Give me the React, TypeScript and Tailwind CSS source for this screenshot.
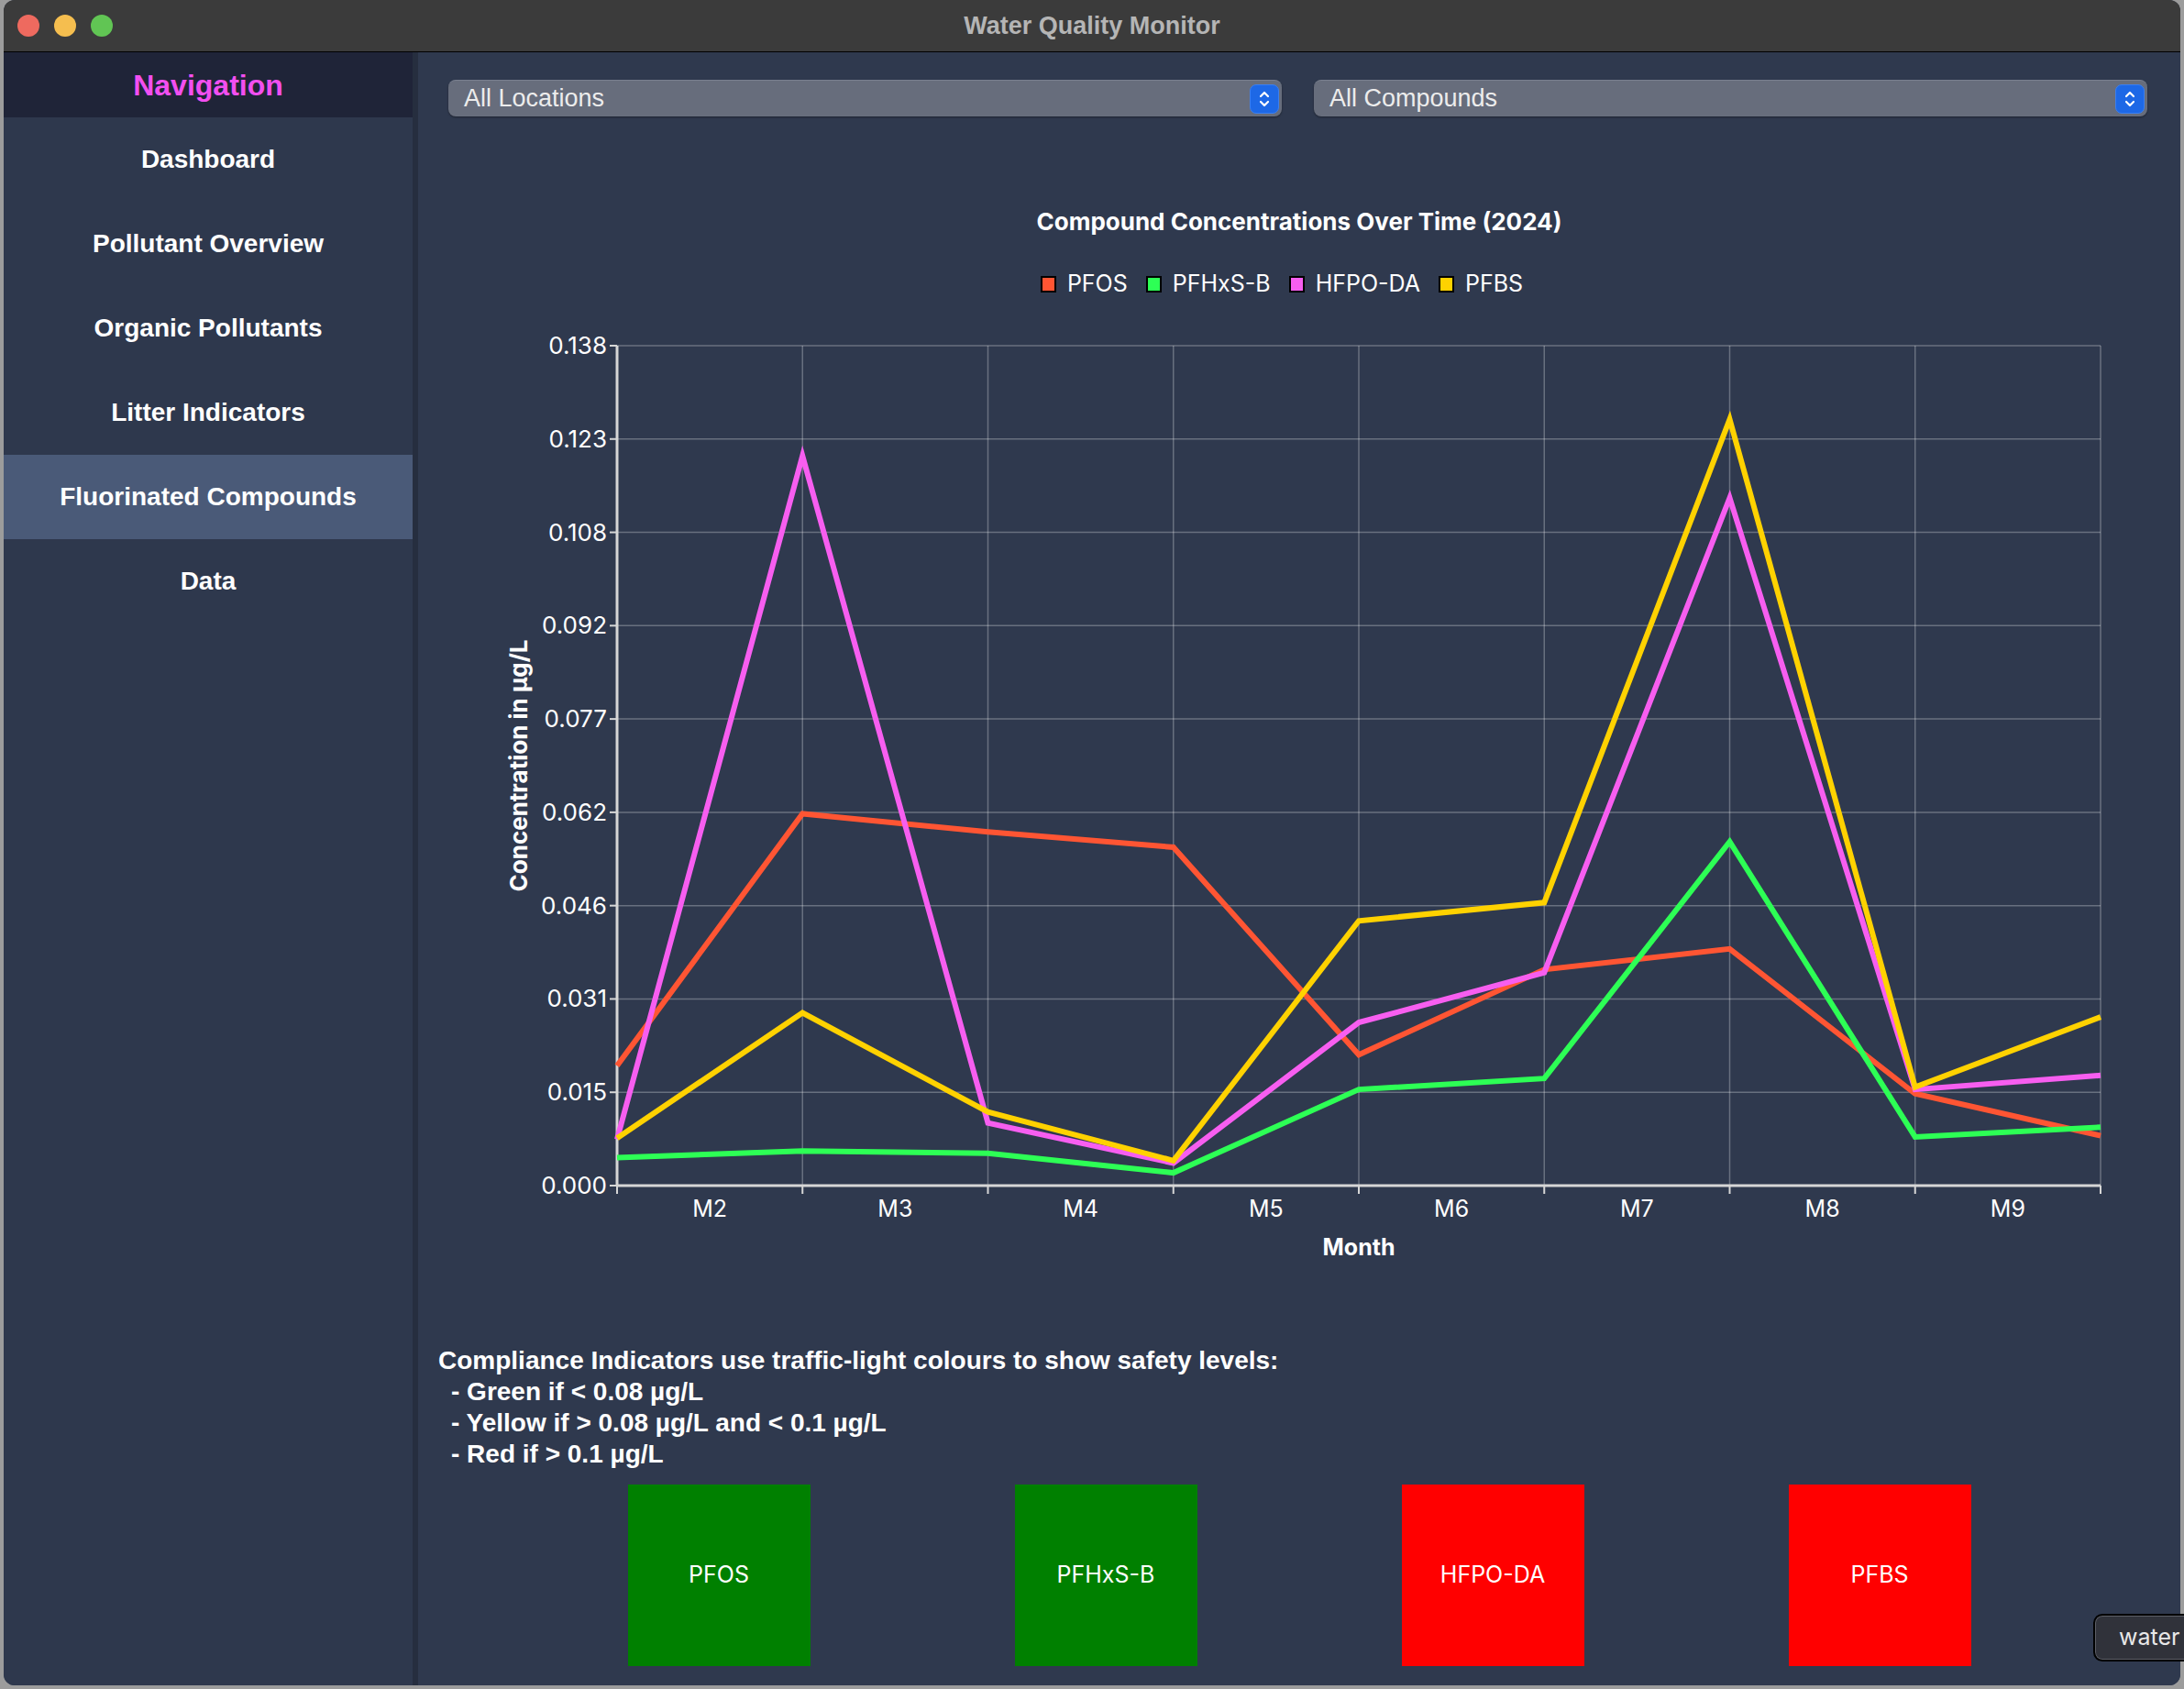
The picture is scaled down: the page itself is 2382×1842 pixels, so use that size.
import { useMemo } from 'react';

interface Series {
  name: string;
  color: string;
  values: number[];
}

const NAV_ITEMS = [
  'Dashboard',
  'Pollutant Overview',
  'Organic Pollutants',
  'Litter Indicators',
  'Fluorinated Compounds',
  'Data',
];

const Y_LABELS = ['0.138', '0.123', '0.108', '0.092', '0.077', '0.062', '0.046', '0.031', '0.015', '0.000'];
const MONTHS = ['M2', 'M3', 'M4', 'M5', 'M6', 'M7', 'M8', 'M9'];

// plot geometry (svg coords, relative to the main column)
const PLOT_LEFT = 217;
const PLOT_RIGHT = 1835;
const PLOT_TOP = 52;
const PLOT_BOTTOM = 968;
const Y_MAX = 0.138;

const COMPLIANCE = [
  { name: 'PFOS', safe: true },
  { name: 'PFHxS-B', safe: true },
  { name: 'HFPO-DA', safe: false },
  { name: 'PFBS', safe: false },
];

function Stepper() {
  return (
    <div className="w-[32px] h-[32px] rounded-[7px] bg-[#1d68e6] border border-[#3b7ff0] flex items-center justify-center">
      <svg width="14" height="22" viewBox="0 0 14 22" fill="none" stroke="white" strokeWidth="2.2" strokeLinecap="round" strokeLinejoin="round">
        <path d="M3 8 L7 4 L11 8" />
        <path d="M3 14 L7 18 L11 14" />
      </svg>
    </div>
  );
}

function Dropdown({ label }: { label: string }) {
  return (
    <div className="flex-1 h-[40px] rounded-[8px] bg-[#676d7c] border-t border-[#7a8090] shadow-[0_1px_2px_rgba(0,0,0,0.4)] flex items-center justify-between pl-[17px] pr-[3px]">
      <span className="text-[27px] text-[#ececec] font-['Liberation_Sans',sans-serif]">{label}</span>
      <Stepper />
    </div>
  );
}

function Chart({ series }: { series: Series[] }) {
  const plotW = PLOT_RIGHT - PLOT_LEFT;
  const plotH = PLOT_BOTTOM - PLOT_TOP;
  const xAt = (i: number) => PLOT_LEFT + (i * plotW) / 8;
  const yAt = (v: number) => PLOT_TOP + (1 - v / Y_MAX) * plotH;

  return (
    <svg width="1921" height="1080" className="block" style={{ fontFamily: 'Inter, sans-serif' }}>
      {/* grid */}
      {Y_LABELS.map((_, k) => {
        const y = PLOT_TOP + (k * plotH) / 9;
        return <line key={`h${k}`} x1={PLOT_LEFT} x2={PLOT_RIGHT} y1={y} y2={y} stroke="rgba(255,255,255,0.28)" strokeWidth="1.5" />;
      })}
      {Array.from({ length: 9 }).map((_, i) => (
        <line key={`v${i}`} x1={xAt(i)} x2={xAt(i)} y1={PLOT_TOP} y2={PLOT_BOTTOM} stroke="rgba(255,255,255,0.28)" strokeWidth="1.5" />
      ))}

      {/* axes */}
      <line x1={PLOT_LEFT} x2={PLOT_LEFT} y1={PLOT_TOP} y2={PLOT_BOTTOM} stroke="#d6d6d6" strokeWidth="3" />
      <line x1={PLOT_LEFT} x2={PLOT_RIGHT} y1={PLOT_BOTTOM} y2={PLOT_BOTTOM} stroke="#d6d6d6" strokeWidth="3" />
      {Y_LABELS.map((label, k) => {
        const y = PLOT_TOP + (k * plotH) / 9;
        return (
          <g key={`yl${k}`}>
            <line x1={PLOT_LEFT - 8} x2={PLOT_LEFT} y1={y} y2={y} stroke="#d6d6d6" strokeWidth="2" />
            <text x={PLOT_LEFT - 11} y={y + 9} textAnchor="end" fontSize="26" fill="#ffffff">
              {label}
            </text>
          </g>
        );
      })}
      {Array.from({ length: 9 }).map((_, i) => (
        <line key={`xt${i}`} x1={xAt(i)} x2={xAt(i)} y1={PLOT_BOTTOM} y2={PLOT_BOTTOM + 9} stroke="#d6d6d6" strokeWidth="2" />
      ))}
      {MONTHS.map((m, i) => (
        <text key={m} x={xAt(i) + plotW / 16} y={PLOT_BOTTOM + 34} textAnchor="middle" fontSize="25" fill="#ffffff">
          {m}
        </text>
      ))}

      {/* axis titles */}
      <text x={(PLOT_LEFT + PLOT_RIGHT) / 2} y={1044} textAnchor="middle" fontSize="25" fontWeight="700" fill="#ffffff">
        Month
      </text>
      <text
        x={0}
        y={0}
        transform="translate(119 510) rotate(-90)"
        textAnchor="middle"
        fontSize="26"
        fontWeight="700"
        fill="#ffffff"
      >
        Concentration in µg/L
      </text>

      {/* data */}
      {series.map((s) => (
        <polyline
          key={s.name}
          points={s.values.map((v, i) => `${xAt(i)},${yAt(v)}`).join(' ')}
          fill="none"
          stroke={s.color}
          strokeWidth="6"
          strokeLinejoin="miter"
        />
      ))}
    </svg>
  );
}

export default function App() {
  const series: Series[] = useMemo(
    () => [
      { name: 'PFOS', color: '#ff5533', values: [0.0197, 0.0611, 0.0581, 0.0556, 0.0215, 0.0355, 0.0389, 0.0151, 0.0082] },
      { name: 'PFHxS-B', color: '#2dff55', values: [0.0046, 0.0057, 0.0053, 0.0021, 0.0158, 0.0176, 0.0565, 0.008, 0.0096] },
      { name: 'HFPO-DA', color: '#f75ef0', values: [0.0076, 0.1199, 0.0103, 0.0037, 0.0268, 0.035, 0.113, 0.0158, 0.0181] },
      { name: 'PFBS', color: '#ffd200', values: [0.0078, 0.0284, 0.0121, 0.0041, 0.0435, 0.0465, 0.1259, 0.0162, 0.0277] },
    ],
    []
  );

  return (
    <div className="relative w-[2382px] h-[1842px] overflow-hidden bg-[#9c9c9c] pl-[4px]">
      <div className="w-[2374px] h-[1838px] rounded-[12px] overflow-hidden flex flex-col bg-[#2f394e]">
        {/* Title bar */}
        <div className="relative h-[57px] shrink-0 bg-[#3b3b3b] border-b border-black flex items-center">
          <div className="flex items-center gap-[16px] pl-[15px]">
            <span className="w-[24px] h-[24px] rounded-full bg-[#ee6a5f]" />
            <span className="w-[24px] h-[24px] rounded-full bg-[#f5be4f]" />
            <span className="w-[24px] h-[24px] rounded-full bg-[#61c554]" />
          </div>
          <div className="absolute inset-0 flex items-center justify-center pointer-events-none">
            <span className="text-[27px] font-bold text-[#b5b5b5] font-['Liberation_Sans',sans-serif]">Water Quality Monitor</span>
          </div>
        </div>

        <div className="flex flex-1 min-h-0">
          {/* Sidebar */}
          <div className="w-[446px] shrink-0 bg-[#2e384d] flex flex-col font-['Liberation_Sans',sans-serif]">
            <div className="h-[71px] bg-[#1f2438] flex items-center justify-center">
              <span className="text-[32px] font-bold text-[#f24ff0]">Navigation</span>
            </div>
            {NAV_ITEMS.map((item) => (
              <div
                key={item}
                className={`h-[92px] flex items-center justify-center text-[28px] font-bold text-white ${
                  item === 'Fluorinated Compounds' ? 'bg-[#4a5a78]' : ''
                }`}
              >
                {item}
              </div>
            ))}
          </div>
          <div className="w-[6px] shrink-0 bg-[#262e3f]" />

          {/* Main */}
          <div className="flex-1 min-w-0 bg-[#2f394e] flex flex-col pt-[30px]">
            <div className="flex gap-[35px] pl-[33px] pr-[36px]">
              <Dropdown label="All Locations" />
              <Dropdown label="All Compounds" />
            </div>

            <div className="mt-[99px] h-[30px] flex items-center justify-center text-[26px] font-bold text-white font-['Inter',sans-serif]">
              Compound Concentrations Over Time (2024)
            </div>

            <div className="mt-[39px] h-[30px] flex items-center justify-center gap-[20px] pr-[38px] text-[25px] text-white font-['Inter',sans-serif]">
              {series.map((s) => (
                <div key={s.name} className="flex items-center gap-[12px]">
                  <span className="w-[17px] h-[18px] border-2 border-black" style={{ backgroundColor: s.color }} />
                  <span>{s.name}</span>
                </div>
              ))}
            </div>

            <Chart series={series} />

            <div className="mt-[62px] pl-[22px] text-[28px] leading-[34px] font-bold text-white font-['Liberation_Sans',sans-serif]">
              <div>Compliance Indicators use traffic-light colours to show safety levels:</div>
              <div className="pl-[14px]">- Green if &lt; 0.08 µg/L</div>
              <div className="pl-[14px]">- Yellow if &gt; 0.08 µg/L and &lt; 0.1 µg/L</div>
              <div className="pl-[14px]">- Red if &gt; 0.1 µg/L</div>
            </div>

            <div className="mt-[16px] flex justify-center">
              {COMPLIANCE.map((c) => (
                <div key={c.name} className="w-[422px] flex justify-center">
                  <div
                    className={`w-[199px] h-[198px] flex items-center justify-center text-[25px] text-white font-['Inter',sans-serif] ${
                      c.safe ? 'bg-[#008000]' : 'bg-[#ff0000]'
                    }`}
                  >
                    {c.name}
                  </div>
                </div>
              ))}
            </div>
          </div>
        </div>
      </div>

      {/* floating label at the bottom right */}
      <div className="absolute left-[2283px] top-[1760px] w-[140px] h-[52px] rounded-[10px] border-2 border-black bg-[#30323a] shadow-[inset_0_0_0_1px_#5c5e66] flex items-center pl-[26px]">
        <span className="text-[25px] text-[#e8e8e8] font-['Inter',sans-serif]">water</span>
      </div>
    </div>
  );
}
